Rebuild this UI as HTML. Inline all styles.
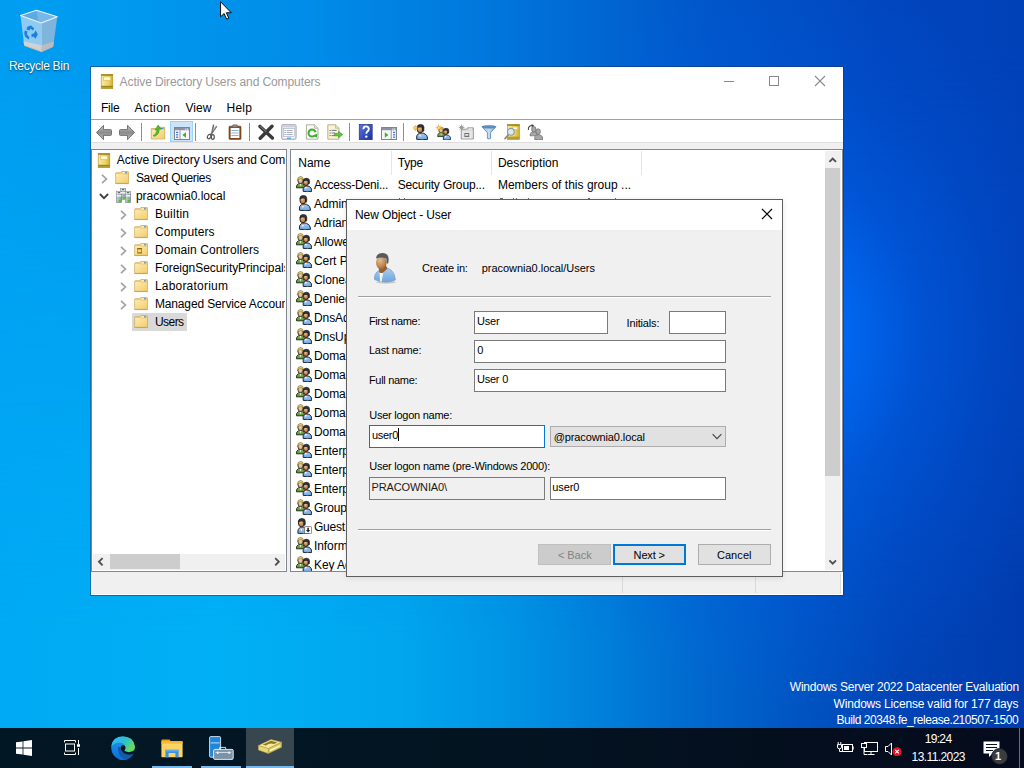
<!DOCTYPE html>
<html><head><meta charset="utf-8"><title>Desktop</title>
<style>
html,body{margin:0;padding:0}
body{width:1024px;height:768px;overflow:hidden;position:relative;font-family:"Liberation Sans",sans-serif;
background:#0a6fd6;}
.b{position:absolute;display:block;box-sizing:border-box}
.t{position:absolute;white-space:nowrap;font-family:"Liberation Sans",sans-serif}
</style></head>
<body>

<svg width="0" height="0" style="position:absolute">
<defs>
<linearGradient id="gBook" x1="0" y1="0" x2="1" y2="0"><stop offset="0" stop-color="#f7eba8"/><stop offset="0.6" stop-color="#ecd567"/><stop offset="1" stop-color="#d2ae2e"/></linearGradient>
<linearGradient id="gFold" x1="0" y1="0" x2="1" y2="1"><stop offset="0" stop-color="#fdebb0"/><stop offset="1" stop-color="#f2cd6e"/></linearGradient>
<linearGradient id="gBlue" x1="0" y1="0" x2="0" y2="1"><stop offset="0" stop-color="#a9cdf3"/><stop offset="1" stop-color="#6fa4dc"/></linearGradient>
<linearGradient id="gGreen" x1="0" y1="0" x2="0" y2="1"><stop offset="0" stop-color="#92c862"/><stop offset="1" stop-color="#4e8a2e"/></linearGradient>
<radialGradient id="gFace" cx="0.4" cy="0.35" r="0.7"><stop offset="0" stop-color="#eec08e"/><stop offset="1" stop-color="#a4662c"/></radialGradient>
<radialGradient id="gFace3" cx="0.38" cy="0.3" r="0.75"><stop offset="0" stop-color="#e4bc90"/><stop offset="0.6" stop-color="#c08c58"/><stop offset="1" stop-color="#96602e"/></radialGradient>
<radialGradient id="gFace2" cx="0.4" cy="0.35" r="0.7"><stop offset="0" stop-color="#f7dcc0"/><stop offset="1" stop-color="#cf9a6a"/></radialGradient>
<linearGradient id="gArrow" x1="0" y1="0" x2="0" y2="1"><stop offset="0" stop-color="#c6c6c6"/><stop offset="0.5" stop-color="#8c8c8c"/><stop offset="1" stop-color="#bcbcbc"/></linearGradient>
<linearGradient id="gSrv" x1="0" y1="0" x2="1" y2="0"><stop offset="0" stop-color="#c9ced4"/><stop offset="1" stop-color="#8e979f"/></linearGradient>
<linearGradient id="gHelp" x1="0" y1="0" x2="1" y2="1"><stop offset="0" stop-color="#5a78e0"/><stop offset="1" stop-color="#1c2e9a"/></linearGradient>
<linearGradient id="gFun" x1="0" y1="0" x2="1" y2="0"><stop offset="0" stop-color="#8fb8dd"/><stop offset="0.5" stop-color="#c7e0f4"/><stop offset="1" stop-color="#6b9ac8"/></linearGradient>
<linearGradient id="gBin" x1="0" y1="0" x2="1" y2="0"><stop offset="0" stop-color="#cfe4f2"/><stop offset="0.5" stop-color="#eef6fb"/><stop offset="1" stop-color="#b7d3e6"/></linearGradient>
<linearGradient id="gEdge1" x1="0" y1="0.2" x2="1" y2="0.7"><stop offset="0" stop-color="#33b8f8"/><stop offset="0.5" stop-color="#2cc0d0"/><stop offset="1" stop-color="#6ee048"/></linearGradient>
<linearGradient id="gEdge2" x1="0" y1="0" x2="0" y2="1"><stop offset="0" stop-color="#1e9be8"/><stop offset="1" stop-color="#0b6cd6"/></linearGradient>

<symbol id="adbook" viewBox="0 0 16 16">
 <rect x="2.2" y="0.3" width="11.6" height="14.4" fill="url(#gBook)" stroke="#b08c20" stroke-width="0.6"/>
 <rect x="2.2" y="0.3" width="11.6" height="1.5" fill="#a8841c"/>
 <rect x="4.5" y="2.9" width="7" height="3.4" fill="#fffbd6" stroke="#dcc25a" stroke-width="0.7"/>
 <rect x="2.2" y="11.9" width="11.6" height="2.8" fill="#b89c30"/>
 <rect x="2.2" y="11.9" width="11.6" height="0.7" fill="#8e7418"/>
</symbol>

<symbol id="folder" viewBox="0 0 16 16">
 <path d="M1.7 13.6V3.3Q1.7 2.7 2.3 2.7H6.8L7.8 1.5H13.9Q14.5 1.5 14.5 2.1V13.6Z" fill="#efcf7c" stroke="#cfa54c" stroke-width="0.7"/>
 <path d="M2.2 13.2V3.9H7.3L8.3 4.8H14V13.2Z" fill="url(#gFold)"/>
 <rect x="8.7" y="2.3" width="2.2" height="1.1" fill="#fff"/><rect x="10.9" y="2.3" width="2" height="1.1" fill="#3f8ae8"/>
 <rect x="1.7" y="12.9" width="12.8" height="0.9" fill="#c9a04a"/>
</symbol>

<symbol id="oufolder" viewBox="0 0 16 16">
 <use href="#folder"/>
 <rect x="4.2" y="6.2" width="4.8" height="5.4" fill="#a4800c"/>
 <rect x="4.8" y="7.3" width="3.4" height="2.8" fill="#ead78a"/>
 <rect x="4.2" y="6.2" width="4.8" height="0.9" fill="#7f6208"/>
</symbol>

<symbol id="domain" viewBox="0 0 16 16">
 <g stroke="#6f7880" stroke-width="0.5">
 <rect x="5.3" y="0.3" width="5.4" height="11" fill="url(#gSrv)"/>
 <rect x="1.3" y="3.3" width="5.4" height="11.4" fill="url(#gSrv)"/>
 <rect x="10.3" y="3.3" width="5.4" height="11.4" fill="url(#gSrv)"/>
 </g>
 <rect x="5.8" y="0.8" width="4.4" height="2" fill="#e9edf0"/><rect x="6.8" y="1.3" width="2.4" height="0.8" fill="#26323c"/>
 <rect x="1.8" y="3.8" width="4.4" height="2" fill="#e9edf0"/><rect x="2.8" y="4.3" width="2.4" height="0.8" fill="#26323c"/>
 <rect x="10.8" y="3.8" width="4.4" height="2" fill="#e9edf0"/><rect x="11.8" y="4.3" width="2.4" height="0.8" fill="#26323c"/>
 <rect x="1.8" y="7" width="4.4" height="1.6" fill="#eef1f3"/><rect x="10.8" y="7" width="4.4" height="1.6" fill="#eef1f3"/><rect x="5.8" y="4" width="4.4" height="1.6" fill="#eef1f3"/>
 <rect x="3.8" y="12" width="2.2" height="2" fill="#3fd11f"/><rect x="12.8" y="12" width="2.2" height="2" fill="#3fd11f"/><rect x="7.8" y="9" width="2.2" height="2" fill="#3fd11f"/>
</symbol>

<symbol id="user" viewBox="0 0 16 16">
 <path d="M3.4 15.2Q2.9 11 5.2 9.7L8 9 10.6 9.3Q14.3 10.5 14.7 15.2Q9 16.5 3.4 15.2Z" fill="url(#gBlue)" stroke="#1c2a3a" stroke-width="1"/>
 <path d="M5.9 9.9L6.9 13.6 8.1 9.9Z" fill="#fff"/>
 <path d="M5.5 8.2L5.9 10.2Q7 11 8.2 10.2L8.9 8Z" fill="#9a5f2a"/>
 <ellipse cx="6.9" cy="5" rx="3" ry="3.8" fill="url(#gFace)" stroke="#1a1a1a" stroke-width="0.9"/>
 <path d="M3.8 3.8Q3.9 0.4 7.4 0.4Q10.7 0.4 10.8 3.4L10.7 6.8Q10.2 7.8 9.5 6.8L9.3 3.3Q6.6 2.5 3.8 3.8Z" fill="#34383c" stroke="#111" stroke-width="0.6"/>
</symbol>

<symbol id="group" viewBox="0 0 16 16">
 <path d="M0.4 11.8Q0.2 8.6 2.3 7.8L4.4 7.4 6.8 7.8Q8.5 8.6 8.5 11.8Z" fill="url(#gGreen)" stroke="#16280e" stroke-width="0.9"/>
 <path d="M3.8 8L4.5 10.8 5.2 8Z" fill="#fff"/>
 <ellipse cx="4.5" cy="4.4" rx="2.6" ry="3.2" fill="url(#gFace2)" stroke="#2a2618" stroke-width="0.8"/>
 <path d="M1.7 4.6Q1.2 0.5 4.6 0.4Q7.6 0.4 7.4 4.2Q6.4 2.5 4.4 2.7Q2.4 2.7 1.7 4.6Z" fill="#e2cd7c" stroke="#6a5c24" stroke-width="0.5"/>
 <path d="M7.1 15.3Q6.7 11.6 8.6 10.5L10.8 9.9 13 10.3Q15.7 11.3 15.9 15.3Q11 16.3 7.1 15.3Z" fill="url(#gBlue)" stroke="#1c2a3a" stroke-width="1"/>
 <path d="M9 10.7L9.9 13.6 10.8 10.7Z" fill="#fff"/>
 <path d="M8.7 8.7L9 10.6Q10 11.4 11 10.6L11.7 8.5Z" fill="#9a5f2a"/>
 <ellipse cx="10" cy="6.2" rx="2.6" ry="3.3" fill="url(#gFace)" stroke="#1a1a1a" stroke-width="0.9"/>
 <path d="M7.3 4.9Q7.3 2.2 10.4 2.2Q13.5 2.2 13.5 4.8L13.4 7.6Q12.9 8.4 12.3 7.6L12.1 4.7Q9.8 4 7.3 4.9Z" fill="#34383c" stroke="#111" stroke-width="0.6"/>
</symbol>

<symbol id="guest" viewBox="0 0 16 16">
 <use href="#user" transform="translate(-1.5,0)"/>
 <rect x="8.6" y="8.6" width="7" height="7" rx="1" fill="#fff" stroke="#555" stroke-width="0.7"/>
 <path d="M11.3 9.8H12.9V12H14.2L12.1 14.6 10 12H11.3Z" fill="#222"/>
</symbol>

<symbol id="back" viewBox="0 0 16 16"><path d="M0.5 8.5L7.5 1.3V5.6H14.6Q15.5 5.6 15.5 6.5V10.5Q15.5 11.4 14.6 11.4H7.5V15.7Z" fill="url(#gArrow)" stroke="#6a6a6a" stroke-width="0.9" stroke-linejoin="round"/></symbol>
<symbol id="fwd" viewBox="0 0 16 16"><path d="M15.5 8.5L8.5 1.3V5.6H1.4Q0.5 5.6 0.5 6.5V10.5Q0.5 11.4 1.4 11.4H8.5V15.7Z" fill="url(#gArrow)" stroke="#6a6a6a" stroke-width="0.9" stroke-linejoin="round"/></symbol>

<symbol id="upf" viewBox="0 0 16 16">
 <path d="M1.3 15V4.6H6.8L7.8 3.3H14.7V15Z" fill="#f0d07e" stroke="#c79e48" stroke-width="0.7"/>
 <path d="M1.8 14.5V6H14.2V14.5Z" fill="url(#gFold)"/>
 <rect x="11" y="4" width="2.4" height="1" fill="#3f8ae8"/>
 <path d="M3.2 11.6Q6.6 10.4 7 5.6L5 6 8.2 1 11 5.2 9.2 5.2Q9.4 10.4 4.4 12.4Z" fill="#4cc02a" stroke="#2c8a16" stroke-width="0.5"/>
</symbol>

<symbol id="tree" viewBox="0 0 16 16">
 <rect x="0.5" y="2.5" width="15" height="12" fill="#f4f6fa" stroke="#7d8594" stroke-width="1"/>
 <rect x="1" y="3" width="14" height="2.2" fill="#8b93a3"/>
 <rect x="11.2" y="3.6" width="1.2" height="1" fill="#fff"/><rect x="13" y="3.6" width="1.2" height="1" fill="#fff"/>
 <rect x="5.6" y="5.2" width="0.8" height="9" fill="#7d8594"/>
 <rect x="2" y="6.8" width="2.2" height="1.2" fill="#3c73d6"/><rect x="2" y="9.2" width="2.2" height="1.2" fill="#3c73d6"/><rect x="2" y="11.6" width="2.2" height="1.2" fill="#3c73d6"/>
 <path d="M12 7.2V12.8L8.4 10Z" fill="#3fae2a"/>
</symbol>

<symbol id="cut" viewBox="0 0 16 16">
 <path d="M8.6 0.6L6.6 10.4M11.6 2.2L5.2 11.2" stroke="#6a6a6a" stroke-width="1.5" fill="none"/>
 <path d="M11.2 1.6L8 6.6" stroke="#c8c8c8" stroke-width="0.8"/>
 <ellipse cx="4.2" cy="12.6" rx="1.6" ry="2.3" fill="none" stroke="#555" stroke-width="1.2" transform="rotate(30 4.2 12.6)"/>
 <ellipse cx="7.8" cy="13" rx="1.5" ry="2.3" fill="none" stroke="#555" stroke-width="1.2"/>
</symbol>

<symbol id="paste" viewBox="0 0 16 16">
 <rect x="2" y="2.2" width="12" height="13.2" rx="0.8" fill="#8a4a1c" stroke="#6a3410" stroke-width="0.6"/>
 <rect x="3.6" y="4" width="8.8" height="10" fill="#fdfeff"/>
 <rect x="5.6" y="0.8" width="4.8" height="2.6" rx="0.6" fill="#8c8c8c" stroke="#555" stroke-width="0.5"/>
 <path d="M4.4 6.5H11.6M4.4 9H11.6M4.4 11.5H11.6" stroke="#8fb4de" stroke-width="1"/>
</symbol>

<symbol id="del" viewBox="0 0 16 16">
 <path d="M2 2.4L14.4 14M14 2.2L2.2 14.2" stroke="#3a3a3a" stroke-width="3.4" stroke-linecap="round"/>
 <path d="M2.4 2.4L8 7.6" stroke="#707070" stroke-width="1.2" stroke-linecap="round"/>
</symbol>

<symbol id="props" viewBox="0 0 16 16">
 <rect x="0.8" y="0.8" width="14.2" height="14.4" rx="1" fill="#f7f9fc" stroke="#8a8f98" stroke-width="0.9"/>
 <rect x="1.4" y="1.4" width="13" height="2" fill="#c9ced8"/>
 <rect x="2.6" y="4.6" width="10.6" height="8" fill="#fff" stroke="#a0a6b2" stroke-width="0.6"/>
 <path d="M5.6 6.6H11.6M5.6 8.6H11.6M5.6 10.6H11.6" stroke="#8a93a6" stroke-width="0.8"/>
 <rect x="3.6" y="6.2" width="1" height="0.9" fill="#3c73d6"/><rect x="3.6" y="8.2" width="1" height="0.9" fill="#3c73d6"/><rect x="3.6" y="10.2" width="1" height="0.9" fill="#3c73d6"/>
 <rect x="6" y="13.6" width="4" height="1.2" fill="#27a8e8"/>
</symbol>

<symbol id="refresh" viewBox="0 0 16 16">
 <path d="M2.4 0.8H10.6L14 4.2V15.2H2.4Z" fill="#fbfbf6" stroke="#9a9a92" stroke-width="0.8"/>
 <path d="M10.6 0.8V4.2H14" fill="#e8e8e0" stroke="#9a9a92" stroke-width="0.6"/>
 <path d="M11.6 8.2A3.6 3.6 0 1 0 10.6 11.6" fill="none" stroke="#3cae2a" stroke-width="2"/>
 <path d="M9 11.4L13.4 9.4 12.8 13.8Z" fill="#3cae2a"/>
</symbol>

<symbol id="export" viewBox="0 0 16 16">
 <path d="M0.8 0.8H8.6L12 4.2V15.2H0.8Z" fill="#fbf3d2" stroke="#a89e7a" stroke-width="0.8"/>
 <path d="M8.6 0.8V4.2H12" fill="#efe6c0" stroke="#a89e7a" stroke-width="0.6"/>
 <path d="M4.6 6.4H9.6M4.6 9H8M4.6 11.6H8" stroke="#5a6a9a" stroke-width="0.9"/>
 <rect x="2.6" y="6" width="1" height="0.9" fill="#333"/><rect x="2.6" y="8.6" width="1" height="0.9" fill="#333"/><rect x="2.6" y="11.2" width="1" height="0.9" fill="#333"/>
 <path d="M7.6 9.4H11.6V7.4L15.6 10.6 11.6 13.8V11.8H7.6Z" fill="#5ccc3a" stroke="#2f8a1c" stroke-width="0.6"/>
</symbol>

<symbol id="help" viewBox="0 0 16 16">
 <rect x="1.2" y="0.3" width="13" height="15.4" fill="url(#gHelp)" stroke="#1a2680" stroke-width="0.6"/>
 <path d="M5.4 5.2Q5.4 2.4 8 2.4Q10.8 2.4 10.8 5Q10.8 6.6 9.2 7.6Q8.4 8.2 8.4 9.8" fill="none" stroke="#fff" stroke-width="1.9"/>
 <circle cx="8.3" cy="12.6" r="1.2" fill="#fff"/>
</symbol>

<symbol id="action" viewBox="0 0 16 16">
 <rect x="0.5" y="2.5" width="15" height="12" fill="#f4f6fa" stroke="#7d8594" stroke-width="1"/>
 <rect x="1" y="3" width="14" height="2.2" fill="#8b93a3"/>
 <rect x="11.2" y="3.6" width="1.2" height="1" fill="#fff"/><rect x="13" y="3.6" width="1.2" height="1" fill="#fff"/>
 <rect x="9.8" y="5.2" width="0.8" height="9" fill="#7d8594"/>
 <rect x="12" y="6.8" width="2.2" height="1.2" fill="#3c73d6"/><rect x="12" y="9.2" width="2.2" height="1.2" fill="#3c73d6"/><rect x="12" y="11.6" width="2.2" height="1.2" fill="#3c73d6"/>
 <path d="M3.8 7.2V12.8L7.4 10Z" fill="#3fae2a"/>
</symbol>

<symbol id="spark" viewBox="0 0 8 8">
 <path d="M4 0L4.8 2.6 7 1 5.4 3.2 8 4 5.4 4.8 7 7 4.8 5.4 4 8 3.2 5.4 1 7 2.6 4.8 0 4 2.6 3.2 1 1 3.2 2.6Z" fill="#f6a81c"/>
 <circle cx="4" cy="4" r="1.3" fill="#ffd860"/>
</symbol>

<symbol id="newuser" viewBox="0 0 16 16">
 <use href="#user" transform="translate(1.2,0)"/>
 <use href="#spark" x="0" y="0.4" width="7" height="7"/>
</symbol>
<symbol id="newgroup" viewBox="0 0 16 16">
 <use href="#group" transform="translate(2.2,2.4) scale(0.86)"/>
 <use href="#spark" x="0" y="0" width="7.4" height="7.4"/>
</symbol>
<symbol id="newou" viewBox="0 0 16 16">
 <path d="M3.2 15V5.2H8.4L9.4 3.8H15.4V15Z" fill="#d0d0d0" stroke="#8a8a8a" stroke-width="0.8"/>
 <rect x="4" y="6.6" width="10.6" height="7.8" fill="#e6e6e6"/>
 <rect x="6.4" y="9" width="4.8" height="4" fill="#6e6e6e"/><rect x="7.2" y="10" width="3.2" height="1.8" fill="#e0e0e0"/>
 <rect x="11" y="4.6" width="3" height="0.9" fill="#fff"/>
 <path d="M4 0L4.8 2.6 7 1 5.4 3.2 8 4 5.4 4.8 7 7 4.8 5.4 4 8 3.2 5.4 1 7 2.6 4.8 0 4 2.6 3.2 1 1 3.2 2.6Z" fill="#9a9a9a" transform="translate(0,0) scale(0.9)"/>
</symbol>
<symbol id="filter" viewBox="0 0 16 16">
 <path d="M0.8 2.6H15L9.6 8.6V14.4Q8 15.6 6.4 14.4V8.6Z" fill="url(#gFun)" stroke="#4f7fb0" stroke-width="0.8" stroke-linejoin="round"/>
 <ellipse cx="7.9" cy="2.8" rx="6.6" ry="1.4" fill="#5d8fc4" stroke="#4a78a8" stroke-width="0.5"/>
</symbol>
<symbol id="find" viewBox="0 0 16 16">
 <rect x="3.4" y="0.4" width="12" height="15" fill="url(#gBook)" stroke="#b08c20" stroke-width="0.6"/>
 <rect x="3.4" y="0.4" width="12" height="1.5" fill="#a8841c"/>
 <rect x="3.4" y="12.6" width="12" height="2.8" fill="#b89c30"/>
 <rect x="8.6" y="3" width="5" height="2.2" fill="#fffde0" stroke="#d8bc50" stroke-width="0.5"/>
 <path d="M1 14.6L4.6 10.6" stroke="#8a8a8a" stroke-width="1.7" stroke-linecap="round"/>
 <circle cx="6.8" cy="7.8" r="3.4" fill="#d6ecfa" fill-opacity="0.92" stroke="#8f9aa6" stroke-width="1.1"/>
</symbol>
<symbol id="addgrp" viewBox="0 0 16 16">
 <g fill="#a8a8a8" stroke="#5a5a5a" stroke-width="0.6">
 <path d="M3 11.8Q3 8.6 5 8L7 7.6 9 8Q10.6 8.6 10.6 11.8Z"/>
 <ellipse cx="6.8" cy="5.2" rx="2.2" ry="2.8"/>
 <path d="M7.6 15.4Q7.4 11.8 9.4 11L11.4 10.6 13.2 11Q15.8 11.8 16 15.4Q11.6 16.2 7.6 15.4Z"/>
 <ellipse cx="11.2" cy="7.6" rx="2.2" ry="2.8"/>
 </g>
 <path d="M1.4 6Q1 1.6 5.4 1.4" fill="none" stroke="#4a4a4a" stroke-width="1.1"/>
 <path d="M4.6 0L7.2 1.6 4.8 3.4Z" fill="#4a4a4a"/>
</symbol>

<symbol id="user32" viewBox="0 0 32 32">
 <ellipse cx="17" cy="30.2" rx="10" ry="1.5" fill="#000" fill-opacity="0.16"/>
 <path d="M5.6 27.6Q5 21.4 9.8 18.6L12 20.4 14 20 18.6 16.2Q25.8 18.8 26.3 28Q17 32.4 5.6 27.6Z" fill="url(#gBlue)" stroke="#6a98c8" stroke-width="0.7"/>
 <path d="M10.6 20.6L11 29.4 12.6 29.8 14.2 20.4Z" fill="#f4f7fd"/>
 <path d="M9.6 15.6L10.4 20.2Q12.4 22 14.4 20.2L18.4 16.4 16.8 13Z" fill="#94602e"/>
 <ellipse cx="12.3" cy="10.8" rx="5.3" ry="6.7" fill="url(#gFace3)"/>
 <path d="M6.9 6.6Q7.6 1 13.6 0.9Q19.9 1.2 19.7 7.6L19.3 11Q18.4 12.2 17.6 11L17.3 6.8Q12.6 4.2 6.9 6.6Z" fill="#555a60"/>
</symbol>

<symbol id="bin" viewBox="16 8 46 48">
 <path d="M20.5 15.5L36.5 10.3 57.3 16.8 41.3 23Z" fill="#5fa9e2"/>
 <path d="M36.5 10.3L57.3 16.8 41.3 23 38 20Z" fill="#78b8e8"/>
 <path d="M20.5 15.5L41.3 23 41.5 51.7 24.2 45.5Z" fill="#8fcaf0"/>
 <path d="M41.3 23L57.3 16.8 53.2 46.5 41.5 51.7Z" fill="#7fb4dc"/>
 <path d="M23.5 41.2L41.4 45.2 41.5 51.7 24.2 45.5Z" fill="#d2d2d4"/>
 <path d="M41.4 45.2L53.9 41.6 53.2 46.5 41.5 51.7Z" fill="#bcbcc0"/>
 <path d="M24.2 45.5L41.5 51.7 53.2 46.5" fill="none" stroke="#c4b4aa" stroke-width="0.9"/>
 <path d="M20.5 15.5L36.5 10.3 57.3 16.8 41.3 23Z" fill="none" stroke="#e8f4fc" stroke-width="1.1" stroke-linejoin="round"/>
 <path d="M41.3 23L41.5 51.7" stroke="#a8d4f2" stroke-width="0.8"/>
 <g fill="#1c7fdc">
 <path d="M27.6 26.4L31 25.4 34.4 28.6 32.6 30.4 30.6 28.4 29.4 30.6 26.4 29.6Z"/>
 <path d="M35.6 30.2L37.8 34.4 35.4 38.8 33.6 36.4 31.6 37.2 31.4 34.2 34.2 33.2Z"/>
 <path d="M24.8 30.6L27.6 31.6 26.8 34 29.4 37.4 28.6 39.4 25 36.4 24.2 33Z"/>
 </g>
</symbol>

<symbol id="cursor" viewBox="0 0 13 20">
 <path d="M0.6 0.8V16.6L4.3 13.1 6.9 19 9.2 18 6.7 12.3H11.8Z" fill="#fff" stroke="#000" stroke-width="1"/>
</symbol>

<symbol id="winlogo" viewBox="0 0 16 16">
 <path d="M0 2.3L6.6 1.4V7.6H0ZM7.4 1.3L16 0V7.6H7.4ZM0 8.4H6.6V14.6L0 13.7ZM7.4 8.4H16V16L7.4 14.7Z" fill="#fff"/>
</symbol>
<symbol id="taskview" viewBox="0 0 17 15">
 <path d="M0.5 2.4V0.5H11.5V2.4M0.5 12.6V14.5H11.5V12.6" fill="none" stroke="#fff" stroke-width="1"/>
 <rect x="1.5" y="4" width="9" height="7" fill="none" stroke="#fff" stroke-width="1"/>
 <path d="M14.5 0V4.2M14.5 8V15" stroke="#fff" stroke-width="1"/>
 <rect x="13" y="4.2" width="3" height="2.6" fill="#fff"/>
</symbol>
<symbol id="edge" viewBox="0 0 24 24">
 <path d="M0.2 12Q0.2 6 4 3Q12 -1 20 3Q24 7 23.8 12L22.4 17.8Q20.6 21.6 16 23.6Q12 24.6 8 23.4Q0.6 20 0.2 12Z" fill="url(#gEdge2)"/>
 <path d="M7.2 10.8Q6.2 16 9.6 20.2Q12.6 23.6 16 23.6Q20.6 21.6 22.4 17.8Q18 19.6 13.6 17.8Q9.8 15.4 9.8 11.4Z" fill="#1459ac"/>
 <path d="M0.3 10.8Q1.2 0.5 12 0.2Q23.2 0.8 23.9 10.8Q23.8 15.4 18.6 15.9Q14.8 16.1 13.4 14.6Q15 13.2 14.5 10.8Q13 6.8 8.4 6.6Q3 6.8 0.3 10.8Z" fill="url(#gEdge1)"/>
 <path d="M9.7 11.6Q10 8.9 12.3 9Q14.7 9.5 14.4 12Q13.9 13.9 13.3 14.6Q15 16.4 18.8 16.1Q21.8 15.7 23.3 14.2Q23.2 16.2 22.4 17.8Q17.6 19.6 13.4 17.6Q9.8 15.2 9.7 11.6Z" fill="#031622"/>
</symbol>
<symbol id="explorer" viewBox="0 0 22 19">
 <path d="M0.4 1.4Q0.4 0.4 1.4 0.4H8.4L10 2.4H0.4Z" fill="#e8a317"/>
 <rect x="0.4" y="2.2" width="21.2" height="16" rx="0.8" fill="#fcd462"/>
 <rect x="0.4" y="2.2" width="21.2" height="2.4" fill="#f3b93a"/>
 <path d="M4.4 18.2V10.8H17.6V18.2H14.4V14H7.6V18.2Z" fill="#3d8fe0"/>
 <rect x="4.4" y="10.8" width="13.2" height="1.6" fill="#64aef0"/>
</symbol>
<symbol id="srvmgr" viewBox="0 0 25 24">
 <rect x="0.6" y="0.6" width="11" height="20.6" rx="1" fill="#1f86da" stroke="#dcebf8" stroke-width="0.9"/>
 <rect x="1.6" y="6.4" width="9" height="1" fill="#bfe0fa"/>
 <rect x="4.6" y="13.4" width="19.6" height="10" rx="1.2" fill="#7a93a8" stroke="#eef4fa" stroke-width="0.9"/>
 <path d="M10.6 13.2V11.4H16.6V13.2" fill="none" stroke="#eef4fa" stroke-width="0.9"/>
 <path d="M6.6 16.4H22.2" stroke="#eef4fa" stroke-width="0.8"/>
 <rect x="8" y="15.6" width="1.4" height="2.4" fill="#eef4fa"/><rect x="19.4" y="15.6" width="1.4" height="2.4" fill="#eef4fa"/>
</symbol>
<symbol id="adtask" viewBox="0 0 24 15">
 <path d="M0.4 6.6L13 0.6 23.6 3.2 10.4 9.6Z" fill="#f3e9a0" stroke="#b8a23a" stroke-width="0.5"/>
 <path d="M4.6 5.8L13 1.8 19.4 3.4 16 5Q11.6 3.2 8 6.6Z" fill="#8e7a1e"/>
 <path d="M0.4 6.6L10.4 9.6V14.6L0.4 11Z" fill="#e6d878" stroke="#b8a23a" stroke-width="0.5"/>
 <path d="M10.4 9.6L23.6 3.2V8.2L10.4 14.6Z" fill="#d9c860" stroke="#b8a23a" stroke-width="0.5"/>
 <path d="M12 11.6L22 6.8" stroke="#fffbe0" stroke-width="1.2"/>
</symbol>
<symbol id="trayplug" viewBox="0 0 17 12">
 <rect x="5.5" y="2.5" width="10" height="7" fill="none" stroke="#fff" stroke-width="1"/>
 <rect x="15.5" y="4.4" width="1.2" height="3.2" fill="#fff"/>
 <rect x="7" y="4" width="5" height="4" fill="#fff"/>
 <path d="M1.2 0V2.6M3.8 0V2.6" stroke="#fff" stroke-width="1"/>
 <path d="M0.5 2.6H4.5V5Q4.5 6.8 2.5 6.8Q0.5 6.8 0.5 5Z" fill="#031622" stroke="#fff" stroke-width="1"/>
 <path d="M2.5 7V9.5H6" fill="none" stroke="#fff" stroke-width="1"/>
</symbol>
<symbol id="traynet" viewBox="0 0 17 14">
 <rect x="3.5" y="0.5" width="13" height="9" fill="none" stroke="#fff" stroke-width="1"/>
 <path d="M10 9.5V12.5M6.5 12.5H13.5" stroke="#fff" stroke-width="1"/>
 <rect x="0.5" y="1.5" width="5" height="4" fill="#031622" stroke="#fff" stroke-width="1"/>
 <path d="M3 5.5V12.5H6" fill="none" stroke="#fff" stroke-width="1"/>
</symbol>
<symbol id="trayvol" viewBox="0 0 17 14">
 <path d="M0.5 4.5H3L6.5 1V13L3 9.5H0.5Z" fill="none" stroke="#fff" stroke-width="1"/>
 <circle cx="12.1" cy="9.7" r="4.5" fill="#e81123"/>
 <path d="M10.2 7.8L13.8 11.4M13.8 7.8L10.2 11.4" stroke="#fff" stroke-width="1.2"/>
</symbol>
<symbol id="traynote" viewBox="0 0 26 24">
 <path d="M0.5 0.5H16.5V12.5H9.5L6 16V12.5H0.5Z" fill="#fff"/>
 <path d="M3 3.5H14M3 6.5H14M3 9.5H10" stroke="#0a1420" stroke-width="1"/>
 <circle cx="16.6" cy="15.4" r="8" fill="#3c3c40" stroke="#0a1420" stroke-width="0.8"/>
</symbol>
</defs>
</svg>
<div class="b" style="left:0;top:0;width:1024px;height:768px;
background:linear-gradient(to right,#009ef1 0px,#009bf0 90px,#008ce8 312px,#0074da 512px,#0055c8 712px,#0045bc 880px,#0041b8 1024px);"></div>
<div class="b" style="left:0;top:0;width:1024px;height:768px;
background:linear-gradient(to right,#00aaf4 0px,#00b0f5 220px,#00a6ee 400px,#0096e6 500px,#0080da 600px,#0068ce 700px,#0054c2 800px,#0044b6 900px,#003cae 1024px);
-webkit-mask-image:linear-gradient(to bottom,rgba(0,0,0,0) 60px,rgba(0,0,0,1) 640px);mask-image:linear-gradient(to bottom,rgba(0,0,0,0) 60px,rgba(0,0,0,1) 640px);"></div>
<div class="b" style="left:0;top:0;width:1024px;height:768px;
background:radial-gradient(ellipse 300px 380px at 800px 335px, rgba(0,112,255,0.95) 0%, rgba(0,110,252,0.8) 15%, rgba(0,104,248,0.42) 40%, rgba(0,100,245,0.20) 65%, rgba(0,90,230,0) 100%);"></div>
<svg class="b" style="left:16px;top:8px" width="46" height="48" viewBox="0 0 46 48"><use href="#bin"/></svg>
<div class="t" style="left:8.9px;top:58px;font-size:12px;line-height:16px;color:#fff;letter-spacing:-0.287px;text-shadow:0 1px 2px rgba(0,0,0,.5),0 0 1px rgba(0,0,0,.35);">Recycle Bin</div>
<div class="t" style="left:789.8px;top:679px;font-size:12px;line-height:16px;color:#fff;letter-spacing:-0.234px;">Windows Server 2022 Datacenter Evaluation</div>
<div class="t" style="left:833.5px;top:696px;font-size:12px;line-height:16px;color:#fff;letter-spacing:-0.178px;">Windows License valid for 177 days</div>
<div class="t" style="left:836.5px;top:712px;font-size:12px;line-height:16px;color:#fff;letter-spacing:-0.444px;">Build 20348.fe_release.210507-1500</div>
<div class="b" style="left:90px;top:66px;width:754px;height:530px;background:#fff;border:1px solid rgba(20,50,100,.5);background-clip:padding-box;"></div>
<svg class="b" style="left:99px;top:74px" width="16" height="16" viewBox="0 0 16 16"><use href="#adbook"/></svg>
<div class="t" style="left:119.6px;top:74px;font-size:12px;line-height:16px;color:#999;letter-spacing:-0.093px;">Active Directory Users and Computers</div>
<svg class="b" style="left:700px;top:67px" width="143" height="30" viewBox="0 0 143 30"><path d="M24 14.5H34" stroke="#8a8a8a" stroke-width="1"/><rect x="69.5" y="9.5" width="9" height="9" fill="none" stroke="#8a8a8a" stroke-width="1"/><path d="M115 9L125 19M125 9L115 19" stroke="#8a8a8a" stroke-width="1.1"/></svg>
<div class="t" style="left:100.9px;top:100px;font-size:12px;line-height:16px;color:#000;letter-spacing:-0.159px;">File</div>
<div class="t" style="left:134.6px;top:100px;font-size:12px;line-height:16px;color:#000;letter-spacing:0.392px;">Action</div>
<div class="t" style="left:185.4px;top:100px;font-size:12px;line-height:16px;color:#000;letter-spacing:0.102px;">View</div>
<div class="t" style="left:226.6px;top:100px;font-size:12px;line-height:16px;color:#000;letter-spacing:0.205px;">Help</div>
<div class="b" style="left:91px;top:119px;width:752px;height:1px;background:#a0a0a0;"></div>
<div class="b" style="left:91px;top:142px;width:752px;height:1px;background:#dfdfdf;"></div>
<div class="b" style="left:91px;top:143px;width:752px;height:6px;background:#f0f0f0;"></div>
<div class="b" style="left:170px;top:121px;width:23px;height:21px;background:#cce4f7;border:1px solid #99d1ff;"></div>
<svg class="b" style="left:96px;top:124px" width="16" height="16" viewBox="0 0 16 16"><use href="#back"/></svg>
<svg class="b" style="left:119px;top:124px" width="16" height="16" viewBox="0 0 16 16"><use href="#fwd"/></svg>
<div class="b" style="left:141px;top:123px;width:1px;height:18px;background:#8d8d8d;"></div>
<svg class="b" style="left:150px;top:124px" width="16" height="16" viewBox="0 0 16 16"><use href="#upf"/></svg>
<svg class="b" style="left:174px;top:125px" width="16" height="16" viewBox="0 0 16 16"><use href="#tree"/></svg>
<div class="b" style="left:195px;top:123px;width:1px;height:18px;background:#8d8d8d;"></div>
<svg class="b" style="left:205px;top:124px" width="16" height="16" viewBox="0 0 16 16"><use href="#cut"/></svg>
<svg class="b" style="left:227px;top:124px" width="16" height="16" viewBox="0 0 16 16"><use href="#paste"/></svg>
<div class="b" style="left:249px;top:123px;width:1px;height:18px;background:#8d8d8d;"></div>
<svg class="b" style="left:258px;top:124px" width="16" height="16" viewBox="0 0 16 16"><use href="#del"/></svg>
<svg class="b" style="left:281px;top:124px" width="16" height="16" viewBox="0 0 16 16"><use href="#props"/></svg>
<svg class="b" style="left:304px;top:124px" width="16" height="16" viewBox="0 0 16 16"><use href="#refresh"/></svg>
<svg class="b" style="left:327px;top:124px" width="16" height="16" viewBox="0 0 16 16"><use href="#export"/></svg>
<div class="b" style="left:349px;top:123px;width:1px;height:18px;background:#8d8d8d;"></div>
<svg class="b" style="left:358px;top:124px" width="16" height="16" viewBox="0 0 16 16"><use href="#help"/></svg>
<svg class="b" style="left:381px;top:125px" width="16" height="16" viewBox="0 0 16 16"><use href="#action"/></svg>
<div class="b" style="left:403px;top:123px;width:1px;height:18px;background:#8d8d8d;"></div>
<svg class="b" style="left:412px;top:124px" width="16" height="16" viewBox="0 0 16 16"><use href="#newuser"/></svg>
<svg class="b" style="left:435px;top:124px" width="16" height="16" viewBox="0 0 16 16"><use href="#newgroup"/></svg>
<svg class="b" style="left:458px;top:124px" width="16" height="16" viewBox="0 0 16 16"><use href="#newou"/></svg>
<svg class="b" style="left:481px;top:124px" width="16" height="16" viewBox="0 0 16 16"><use href="#filter"/></svg>
<svg class="b" style="left:504px;top:124px" width="16" height="16" viewBox="0 0 16 16"><use href="#find"/></svg>
<svg class="b" style="left:527px;top:124px" width="16" height="16" viewBox="0 0 16 16"><use href="#addgrp"/></svg>
<div class="b" style="left:91px;top:149px;width:196px;height:423px;background:#fff;border:1px solid #828790;"></div>
<div class="b" style="left:287px;top:149px;width:3px;height:423px;background:#f0f0f0;"></div>
<div class="b" style="left:92px;top:150px;width:193px;height:404px;overflow:hidden">
<svg class="b" style="left:4.299999999999997px;top:3px" width="16" height="16" viewBox="0 0 16 16"><use href="#adbook"/></svg>
<div class="t" style="left:24.8px;top:2px;font-size:12px;line-height:16px;letter-spacing:-0.079px">Active Directory Users and Computers</div>
<svg class="b" style="left:21.5px;top:20px" width="16" height="16" viewBox="0 0 16 16"><use href="#folder"/></svg>
<svg class="b" style="left:9px;top:23.5px" width="7" height="10" viewBox="0 0 7 10"><path d="M1 0.8L5.4 5 1 9.2" fill="none" stroke="#a2a2a2" stroke-width="1.7"/></svg>
<div class="t" style="left:43.9px;top:20px;font-size:12px;line-height:16px;letter-spacing:-0.344px">Saved Queries</div>
<svg class="b" style="left:22.799999999999997px;top:38px" width="16" height="16" viewBox="0 0 16 16"><use href="#domain"/></svg>
<svg class="b" style="left:7px;top:43.0px" width="10" height="7" viewBox="0 0 10 7"><path d="M0.9 1L5 5.2 9.1 1" fill="none" stroke="#404040" stroke-width="1.8"/></svg>
<div class="t" style="left:43.9px;top:38px;font-size:12px;line-height:16px;letter-spacing:0.008px">pracownia0.local</div>
<svg class="b" style="left:40.5px;top:56px" width="16" height="16" viewBox="0 0 16 16"><use href="#folder"/></svg>
<svg class="b" style="left:28px;top:59.5px" width="7" height="10" viewBox="0 0 7 10"><path d="M1 0.8L5.4 5 1 9.2" fill="none" stroke="#a2a2a2" stroke-width="1.7"/></svg>
<div class="t" style="left:62.9px;top:56px;font-size:12px;line-height:16px;letter-spacing:0.245px">Builtin</div>
<svg class="b" style="left:40.5px;top:74px" width="16" height="16" viewBox="0 0 16 16"><use href="#folder"/></svg>
<svg class="b" style="left:28px;top:77.5px" width="7" height="10" viewBox="0 0 7 10"><path d="M1 0.8L5.4 5 1 9.2" fill="none" stroke="#a2a2a2" stroke-width="1.7"/></svg>
<div class="t" style="left:62.9px;top:74px;font-size:12px;line-height:16px;letter-spacing:0.124px">Computers</div>
<svg class="b" style="left:40.5px;top:92px" width="16" height="16" viewBox="0 0 16 16"><use href="#oufolder"/></svg>
<svg class="b" style="left:28px;top:95.5px" width="7" height="10" viewBox="0 0 7 10"><path d="M1 0.8L5.4 5 1 9.2" fill="none" stroke="#a2a2a2" stroke-width="1.7"/></svg>
<div class="t" style="left:62.9px;top:92px;font-size:12px;line-height:16px;letter-spacing:0.083px">Domain Controllers</div>
<svg class="b" style="left:40.5px;top:110px" width="16" height="16" viewBox="0 0 16 16"><use href="#folder"/></svg>
<svg class="b" style="left:28px;top:113.5px" width="7" height="10" viewBox="0 0 7 10"><path d="M1 0.8L5.4 5 1 9.2" fill="none" stroke="#a2a2a2" stroke-width="1.7"/></svg>
<div class="t" style="left:62.9px;top:110px;font-size:12px;line-height:16px;letter-spacing:-0.054px">ForeignSecurityPrincipals</div>
<svg class="b" style="left:40.5px;top:128px" width="16" height="16" viewBox="0 0 16 16"><use href="#folder"/></svg>
<svg class="b" style="left:28px;top:131.5px" width="7" height="10" viewBox="0 0 7 10"><path d="M1 0.8L5.4 5 1 9.2" fill="none" stroke="#a2a2a2" stroke-width="1.7"/></svg>
<div class="t" style="left:62.9px;top:128px;font-size:12px;line-height:16px;letter-spacing:0.208px">Laboratorium</div>
<svg class="b" style="left:40.5px;top:146px" width="16" height="16" viewBox="0 0 16 16"><use href="#folder"/></svg>
<svg class="b" style="left:28px;top:149.5px" width="7" height="10" viewBox="0 0 7 10"><path d="M1 0.8L5.4 5 1 9.2" fill="none" stroke="#a2a2a2" stroke-width="1.7"/></svg>
<div class="t" style="left:62.9px;top:146px;font-size:12px;line-height:16px;letter-spacing:-0.134px">Managed Service Accounts</div>
<div class="b" style="left:40px;top:163px;width:55px;height:18px;background:#d9d9d9"></div>
<svg class="b" style="left:40.5px;top:164px" width="16" height="16" viewBox="0 0 16 16"><use href="#folder"/></svg>
<div class="t" style="left:62.9px;top:164px;font-size:12px;line-height:16px;letter-spacing:-0.527px">Users</div>
</div>
<div class="b" style="left:93px;top:554px;width:192px;height:16px;background:#f0f0f0;"></div>
<div class="b" style="left:110px;top:554px;width:70px;height:15px;background:#cdcdcd;"></div>
<svg class="b" style="left:92px;top:554px" width="193" height="17" viewBox="0 0 193 17"><path d="M10.6 4.1L7 7.7 10.6 11.3" fill="none" stroke="#505050" stroke-width="1.9"/><path d="M183.2 4.1L186.8 7.7 183.2 11.3" fill="none" stroke="#505050" stroke-width="1.9"/></svg>
<div class="b" style="left:290px;top:149px;width:553px;height:423px;background:#fff;border:1px solid #828790;"></div>
<div class="t" style="left:298.2px;top:155px;font-size:12px;line-height:16px;color:#000;letter-spacing:0.048px;">Name</div>
<div class="t" style="left:397.7px;top:155px;font-size:12px;line-height:16px;color:#000;letter-spacing:-0.203px;">Type</div>
<div class="t" style="left:497.9px;top:155px;font-size:12px;line-height:16px;color:#000;letter-spacing:0.062px;">Description</div>
<div class="b" style="left:391px;top:151px;width:1px;height:24px;background:#e5e5e5;"></div>
<div class="b" style="left:491px;top:151px;width:1px;height:24px;background:#e5e5e5;"></div>
<div class="b" style="left:641px;top:151px;width:1px;height:24px;background:#e5e5e5;"></div>
<div class="b" style="left:291px;top:150px;width:534px;height:421px;overflow:hidden">
<svg class="b" style="left:5px;top:26px" width="16" height="16" viewBox="0 0 16 16"><use href="#group"/></svg>
<div class="t" style="left:23.0px;top:27px;font-size:12px;line-height:16px;letter-spacing:-0.225px">Access-Deni...</div>
<div class="t" style="left:106.7px;top:27px;font-size:12px;line-height:16px;letter-spacing:-0.166px">Security Group...</div>
<div class="t" style="left:206.9px;top:27px;font-size:12px;line-height:16px;letter-spacing:0.020px">Members of this group ...</div>
<svg class="b" style="left:5px;top:45px" width="16" height="16" viewBox="0 0 16 16"><use href="#user"/></svg>
<div class="t" style="left:23.0px;top:46px;font-size:12px;line-height:16px;letter-spacing:-0.082px">Administrator</div>
<div class="t" style="left:106.7px;top:46px;font-size:12px;line-height:16px;letter-spacing:15.466px">User</div>
<div class="t" style="left:206.9px;top:46px;font-size:12px;line-height:16px;letter-spacing:-0.073px">Built-in account for ad...</div>
<svg class="b" style="left:5px;top:64px" width="16" height="16" viewBox="0 0 16 16"><use href="#user"/></svg>
<div class="t" style="left:23.0px;top:65px;font-size:12px;line-height:16px;letter-spacing:-0.087px">Adrian</div>
<div class="t" style="left:106.7px;top:65px;font-size:12px;line-height:16px;letter-spacing:15.466px">User</div>
<svg class="b" style="left:5px;top:83px" width="16" height="16" viewBox="0 0 16 16"><use href="#group"/></svg>
<div class="t" style="left:23.0px;top:84px;font-size:12px;line-height:16px;letter-spacing:-0.085px">Allowed RO...</div>
<div class="t" style="left:106.7px;top:84px;font-size:12px;line-height:16px;letter-spacing:-0.166px">Security Group...</div>
<svg class="b" style="left:5px;top:102px" width="16" height="16" viewBox="0 0 16 16"><use href="#group"/></svg>
<div class="t" style="left:23.0px;top:103px;font-size:12px;line-height:16px;letter-spacing:-0.075px">Cert Publish...</div>
<div class="t" style="left:106.7px;top:103px;font-size:12px;line-height:16px;letter-spacing:-0.166px">Security Group...</div>
<svg class="b" style="left:5px;top:121px" width="16" height="16" viewBox="0 0 16 16"><use href="#group"/></svg>
<div class="t" style="left:23.0px;top:122px;font-size:12px;line-height:16px;letter-spacing:-0.081px">Cloneable D...</div>
<div class="t" style="left:106.7px;top:122px;font-size:12px;line-height:16px;letter-spacing:-0.166px">Security Group...</div>
<svg class="b" style="left:5px;top:140px" width="16" height="16" viewBox="0 0 16 16"><use href="#group"/></svg>
<div class="t" style="left:23.0px;top:141px;font-size:12px;line-height:16px;letter-spacing:-0.090px">Denied ROD...</div>
<div class="t" style="left:106.7px;top:141px;font-size:12px;line-height:16px;letter-spacing:-0.166px">Security Group...</div>
<svg class="b" style="left:5px;top:159px" width="16" height="16" viewBox="0 0 16 16"><use href="#group"/></svg>
<div class="t" style="left:23.0px;top:160px;font-size:12px;line-height:16px;letter-spacing:-0.102px">DnsAdmins</div>
<div class="t" style="left:106.7px;top:160px;font-size:12px;line-height:16px;letter-spacing:-0.166px">Security Group...</div>
<svg class="b" style="left:5px;top:178px" width="16" height="16" viewBox="0 0 16 16"><use href="#group"/></svg>
<div class="t" style="left:23.0px;top:179px;font-size:12px;line-height:16px;letter-spacing:-0.088px">DnsUpdateP...</div>
<div class="t" style="left:106.7px;top:179px;font-size:12px;line-height:16px;letter-spacing:-0.166px">Security Group...</div>
<svg class="b" style="left:5px;top:197px" width="16" height="16" viewBox="0 0 16 16"><use href="#group"/></svg>
<div class="t" style="left:23.0px;top:198px;font-size:12px;line-height:16px;letter-spacing:-0.086px">Domain Ad...</div>
<div class="t" style="left:106.7px;top:198px;font-size:12px;line-height:16px;letter-spacing:-0.166px">Security Group...</div>
<svg class="b" style="left:5px;top:216px" width="16" height="16" viewBox="0 0 16 16"><use href="#group"/></svg>
<div class="t" style="left:23.0px;top:217px;font-size:12px;line-height:16px;letter-spacing:-0.088px">Domain Co...</div>
<div class="t" style="left:106.7px;top:217px;font-size:12px;line-height:16px;letter-spacing:-0.166px">Security Group...</div>
<svg class="b" style="left:5px;top:235px" width="16" height="16" viewBox="0 0 16 16"><use href="#group"/></svg>
<div class="t" style="left:23.0px;top:236px;font-size:12px;line-height:16px;letter-spacing:-0.088px">Domain Con...</div>
<div class="t" style="left:106.7px;top:236px;font-size:12px;line-height:16px;letter-spacing:-0.166px">Security Group...</div>
<svg class="b" style="left:5px;top:254px" width="16" height="16" viewBox="0 0 16 16"><use href="#group"/></svg>
<div class="t" style="left:23.0px;top:255px;font-size:12px;line-height:16px;letter-spacing:-0.089px">Domain Gue...</div>
<div class="t" style="left:106.7px;top:255px;font-size:12px;line-height:16px;letter-spacing:-0.166px">Security Group...</div>
<svg class="b" style="left:5px;top:273px" width="16" height="16" viewBox="0 0 16 16"><use href="#group"/></svg>
<div class="t" style="left:23.0px;top:274px;font-size:12px;line-height:16px;letter-spacing:-0.095px">Domain Users</div>
<div class="t" style="left:106.7px;top:274px;font-size:12px;line-height:16px;letter-spacing:-0.166px">Security Group...</div>
<svg class="b" style="left:5px;top:292px" width="16" height="16" viewBox="0 0 16 16"><use href="#group"/></svg>
<div class="t" style="left:23.0px;top:293px;font-size:12px;line-height:16px;letter-spacing:-0.075px">Enterprise A...</div>
<div class="t" style="left:106.7px;top:293px;font-size:12px;line-height:16px;letter-spacing:-0.166px">Security Group...</div>
<svg class="b" style="left:5px;top:311px" width="16" height="16" viewBox="0 0 16 16"><use href="#group"/></svg>
<div class="t" style="left:23.0px;top:312px;font-size:12px;line-height:16px;letter-spacing:-0.076px">Enterprise K...</div>
<div class="t" style="left:106.7px;top:312px;font-size:12px;line-height:16px;letter-spacing:-0.166px">Security Group...</div>
<svg class="b" style="left:5px;top:330px" width="16" height="16" viewBox="0 0 16 16"><use href="#group"/></svg>
<div class="t" style="left:23.0px;top:331px;font-size:12px;line-height:16px;letter-spacing:-0.077px">Enterprise R...</div>
<div class="t" style="left:106.7px;top:331px;font-size:12px;line-height:16px;letter-spacing:-0.166px">Security Group...</div>
<svg class="b" style="left:5px;top:349px" width="16" height="16" viewBox="0 0 16 16"><use href="#group"/></svg>
<div class="t" style="left:23.0px;top:350px;font-size:12px;line-height:16px;letter-spacing:-0.078px">Group Polic...</div>
<div class="t" style="left:106.7px;top:350px;font-size:12px;line-height:16px;letter-spacing:-0.166px">Security Group...</div>
<svg class="b" style="left:5px;top:368px" width="16" height="16" viewBox="0 0 16 16"><use href="#guest"/></svg>
<div class="t" style="left:23.0px;top:369px;font-size:12px;line-height:16px;letter-spacing:-0.263px">Guest</div>
<div class="t" style="left:106.7px;top:369px;font-size:12px;line-height:16px;letter-spacing:15.466px">User</div>
<svg class="b" style="left:5px;top:387px" width="16" height="16" viewBox="0 0 16 16"><use href="#group"/></svg>
<div class="t" style="left:23.0px;top:388px;font-size:12px;line-height:16px;letter-spacing:-0.075px">Information...</div>
<div class="t" style="left:106.7px;top:388px;font-size:12px;line-height:16px;letter-spacing:-0.166px">Security Group...</div>
<svg class="b" style="left:5px;top:406px" width="16" height="16" viewBox="0 0 16 16"><use href="#group"/></svg>
<div class="t" style="left:23.0px;top:407px;font-size:12px;line-height:16px;letter-spacing:-0.095px">Key Admins</div>
<div class="t" style="left:106.7px;top:407px;font-size:12px;line-height:16px;letter-spacing:-0.166px">Security Group...</div>
</div>
<div class="b" style="left:399px;top:198px;width:1px;height:1px;background:#6a6a6a;"></div>
<div class="b" style="left:404px;top:198px;width:1px;height:1px;background:#6a6a6a;"></div>
<div class="b" style="left:500px;top:198px;width:3px;height:1px;background:#6a6a6a;"></div>
<div class="b" style="left:513px;top:198px;width:1px;height:1px;background:#6a6a6a;"></div>
<div class="b" style="left:516px;top:198px;width:1px;height:1px;background:#6a6a6a;"></div>
<div class="b" style="left:528px;top:198px;width:1px;height:1px;background:#6a6a6a;"></div>
<div class="b" style="left:588px;top:198px;width:2px;height:1px;background:#6a6a6a;"></div>
<div class="b" style="left:615px;top:198px;width:1px;height:1px;background:#6a6a6a;"></div>
<div class="b" style="left:825px;top:151px;width:16px;height:419px;background:#f0f0f0;"></div>
<div class="b" style="left:825px;top:168px;width:15px;height:308px;background:#cdcdcd;"></div>
<svg class="b" style="left:825px;top:151px" width="17" height="420" viewBox="0 0 17 420"><path d="M4.4 10.9L7.7 7.6 11 10.9" fill="none" stroke="#505050" stroke-width="1.9"/><path d="M4.4 409.4L7.7 412.7 11 409.4" fill="none" stroke="#505050" stroke-width="1.9"/></svg>
<div class="b" style="left:91px;top:572px;width:752px;height:23px;background:#fff;"></div>
<div class="b" style="left:91px;top:572px;width:750px;height:22px;background:#f0f0f0;"></div>
<div class="b" style="left:622px;top:574px;width:1px;height:19px;background:#d9d9d9;"></div>
<div class="b" style="left:755px;top:574px;width:1px;height:19px;background:#d9d9d9;"></div>
<div class="b" style="left:840px;top:574px;width:1px;height:19px;background:#d9d9d9;"></div>
<div class="b" style="left:346px;top:199px;width:437px;height:378px;background:#f0f0f0;border:1px solid #5e5e5e;box-shadow:0 1px 6px rgba(0,0,0,.10);"></div>
<div class="b" style="left:347px;top:200px;width:435px;height:30px;background:#fff;"></div>
<div class="t" style="left:355.0px;top:207px;font-size:12px;line-height:16px;color:#000;letter-spacing:-0.107px;">New Object - User</div>
<svg class="b" style="left:757px;top:204px" width="20" height="20" viewBox="0 0 20 20"><path d="M5 5L15 15M15 5L5 15" stroke="#000" stroke-width="1.1"/></svg>
<svg class="b" style="left:369px;top:252px" width="32" height="32" viewBox="0 0 32 32"><use href="#user32"/></svg>
<div class="t" style="left:422.0px;top:261px;font-size:11px;line-height:14px;color:#000;letter-spacing:-0.199px;">Create in:</div>
<div class="t" style="left:481.7px;top:261px;font-size:11px;line-height:14px;color:#000;letter-spacing:-0.023px;">pracownia0.local/Users</div>
<div class="b" style="left:358px;top:296px;width:413px;height:1px;background:#a0a0a0;"></div>
<div class="b" style="left:358px;top:297px;width:413px;height:1px;background:#fff;"></div>
<div class="t" style="left:368.9px;top:314px;font-size:11px;line-height:14px;color:#000;letter-spacing:-0.346px;">First name:</div>
<div class="b" style="left:474px;top:311px;width:134px;height:23px;background:#fff;border:1px solid #7a7a7a;"></div>
<div class="t" style="left:476.9px;top:314px;font-size:11px;line-height:14px;color:#000;letter-spacing:-0.181px;">User</div>
<div class="t" style="left:626.6px;top:316px;font-size:11px;line-height:14px;color:#000;letter-spacing:-0.170px;">Initials:</div>
<div class="b" style="left:669px;top:311px;width:57px;height:23px;background:#fff;border:1px solid #7a7a7a;"></div>
<div class="t" style="left:368.9px;top:343px;font-size:11px;line-height:14px;color:#000;letter-spacing:-0.202px;">Last name:</div>
<div class="b" style="left:474px;top:340px;width:252px;height:23px;background:#fff;border:1px solid #7a7a7a;"></div>
<div class="t" style="left:477.2px;top:343px;font-size:11px;line-height:14px;color:#000;letter-spacing:0.083px;">0</div>
<div class="t" style="left:368.9px;top:373px;font-size:11px;line-height:14px;color:#000;letter-spacing:-0.295px;">Full name:</div>
<div class="b" style="left:474px;top:369px;width:252px;height:23px;background:#fff;border:1px solid #7a7a7a;"></div>
<div class="t" style="left:476.9px;top:372px;font-size:11px;line-height:14px;color:#000;letter-spacing:-0.199px;">User 0</div>
<div class="t" style="left:369.2px;top:408px;font-size:11px;line-height:14px;color:#000;letter-spacing:-0.251px;">User logon name:</div>
<div class="b" style="left:369px;top:425px;width:176px;height:23px;background:#fff;border:1px solid #0078d7;"></div>
<div class="t" style="left:371.9px;top:428px;font-size:11px;line-height:14px;color:#000;letter-spacing:-0.263px;">user0</div>
<div class="b" style="left:398px;top:428px;width:1px;height:13px;background:#000;"></div>
<div class="b" style="left:550px;top:426px;width:176px;height:21px;background:#e1e1e1;border:1px solid #adadad;"></div>
<div class="t" style="left:553.7px;top:430px;font-size:11px;line-height:14px;color:#000;letter-spacing:-0.112px;">@pracownia0.local</div>
<svg class="b" style="left:711px;top:432px" width="12" height="9" viewBox="0 0 12 9"><path d="M1.6 2.2L6 6.6 10.4 2.2" fill="none" stroke="#404040" stroke-width="1.1"/></svg>
<div class="t" style="left:369.2px;top:459px;font-size:11px;line-height:14px;color:#000;letter-spacing:-0.229px;">User logon name (pre-Windows 2000):</div>
<div class="b" style="left:369px;top:477px;width:176px;height:23px;background:#f0f0f0;border:1px solid #7a7a7a;"></div>
<div class="t" style="left:371.6px;top:480px;font-size:11px;line-height:14px;color:#1a1a1a;letter-spacing:-0.165px;">PRACOWNIA0\</div>
<div class="b" style="left:550px;top:477px;width:176px;height:23px;background:#fff;border:1px solid #7a7a7a;"></div>
<div class="t" style="left:552.2px;top:480px;font-size:11px;line-height:14px;color:#000;letter-spacing:-0.063px;">user0</div>
<div class="b" style="left:358px;top:529px;width:413px;height:1px;background:#a0a0a0;"></div>
<div class="b" style="left:358px;top:530px;width:413px;height:1px;background:#fff;"></div>
<div class="b" style="left:538px;top:544px;width:73px;height:21px;background:#cccccc;border:1px solid #bfbfbf;"></div>
<div class="t" style="left:557.9px;top:548px;font-size:11px;line-height:14px;color:#838383;letter-spacing:-0.039px;">&lt; Back</div>
<div class="b" style="left:613px;top:544px;width:73px;height:21px;background:#e1e1e1;border:2px solid #0078d7;"></div>
<div class="t" style="left:633.6px;top:548px;font-size:11px;line-height:14px;color:#000;letter-spacing:-0.150px;">Next &gt;</div>
<div class="b" style="left:698px;top:544px;width:73px;height:21px;background:#e1e1e1;border:1px solid #adadad;"></div>
<div class="t" style="left:716.9px;top:548px;font-size:11px;line-height:14px;color:#000;letter-spacing:0.077px;">Cancel</div>
<div class="b" style="left:0px;top:728px;width:1024px;height:40px;background:linear-gradient(to right,#021724 0%,#031522 40%,#04101f 70%,#050b1c 100%);"></div>
<svg class="b" style="left:16px;top:740px" width="16" height="16" viewBox="0 0 16 16"><use href="#winlogo"/></svg>
<svg class="b" style="left:64px;top:740px" width="17" height="15" viewBox="0 0 17 15"><use href="#taskview"/></svg>
<svg class="b" style="left:111px;top:736px" width="24" height="24" viewBox="0 0 24 24"><use href="#edge"/></svg>
<svg class="b" style="left:161px;top:738.5px" width="22" height="19" viewBox="0 0 22 19"><use href="#explorer"/></svg>
<div class="b" style="left:152px;top:766px;width:40px;height:2px;background:#76b9ed;"></div>
<svg class="b" style="left:208.5px;top:736px" width="25" height="24" viewBox="0 0 25 24"><use href="#srvmgr"/></svg>
<div class="b" style="left:201px;top:766px;width:40px;height:2px;background:#76b9ed;"></div>
<div class="b" style="left:246px;top:728px;width:48px;height:40px;background:#38464f;"></div>
<div class="b" style="left:246px;top:766px;width:48px;height:2px;background:#76b9ed;"></div>
<svg class="b" style="left:257.5px;top:739px" width="24" height="15" viewBox="0 0 24 15"><use href="#adtask"/></svg>
<svg class="b" style="left:836.5px;top:742px" width="17" height="12" viewBox="0 0 17 12"><use href="#trayplug"/></svg>
<svg class="b" style="left:860.5px;top:742px" width="17" height="14" viewBox="0 0 17 14"><use href="#traynet"/></svg>
<svg class="b" style="left:884.5px;top:741.5px" width="17" height="14" viewBox="0 0 17 14"><use href="#trayvol"/></svg>
<div class="t" style="left:924.7px;top:731px;font-size:12px;line-height:16px;color:#fff;letter-spacing:-0.665px;">19:24</div>
<div class="t" style="left:911.6px;top:749px;font-size:12px;line-height:16px;color:#fff;letter-spacing:-0.596px;">13.11.2023</div>
<svg class="b" style="left:983px;top:740.5px" width="26" height="24" viewBox="0 0 26 24"><use href="#traynote"/></svg>
<div class="t" style="left:994.9px;top:749px;font-size:11px;line-height:15px;color:#fff;font-weight:bold;">1</div>
<div class="b" style="left:1019px;top:728px;width:1px;height:40px;background:#6b7078;"></div>
<svg class="b" style="left:219.7px;top:0.7px" width="12.4" height="19.1" viewBox="0 0 13 20"><use href="#cursor"/></svg>
</body></html>
